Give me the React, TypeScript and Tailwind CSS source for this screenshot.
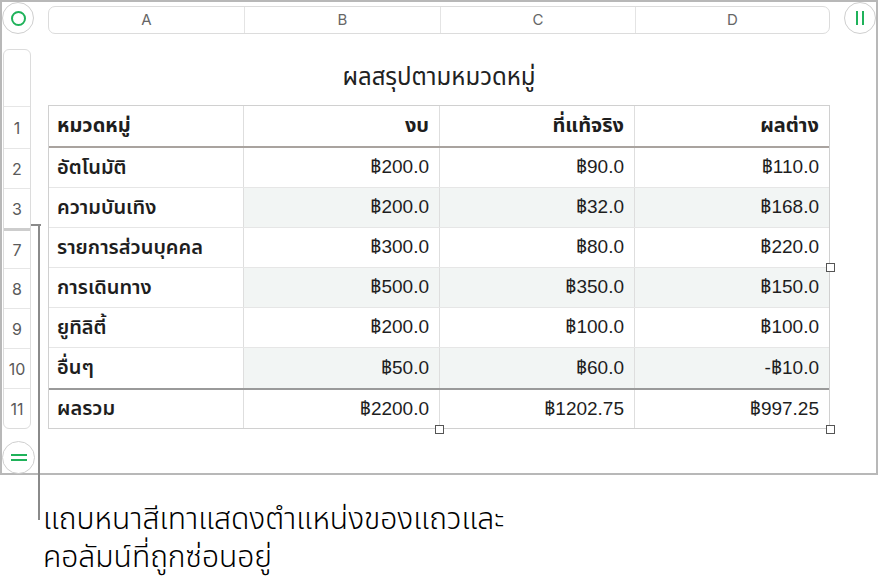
import React from "react";

const rows = [
  { n: "2", name: "อัตโนมัติ", b: "฿200.0", c: "฿90.0", d: "฿110.0", alt: false },
  { n: "3", name: "ความบันเทิง", b: "฿200.0", c: "฿32.0", d: "฿168.0", alt: true },
  { n: "7", name: "รายการส่วนบุคคล", b: "฿300.0", c: "฿80.0", d: "฿220.0", alt: false },
  { n: "8", name: "การเดินทาง", b: "฿500.0", c: "฿350.0", d: "฿150.0", alt: true },
  { n: "9", name: "ยูทิลิตี้", b: "฿200.0", c: "฿100.0", d: "฿100.0", alt: false },
  { n: "10", name: "อื่นๆ", b: "฿50.0", c: "฿60.0", d: "-฿10.0", alt: true },
];

const font = { fontFamily: '"Noto Sans Thai", "Noto Sans", "Liberation Sans", sans-serif' };
const numFont = { fontFamily: '"Liberation Sans", "Noto Sans Thai", sans-serif' };

function Handle({ className }: { className: string }) {
  return <div className={"absolute w-[9px] h-[9px] bg-white border border-[#555] " + className} />;
}

export default function App() {
  return (
    <div className="relative w-[880px] h-[585px] bg-white overflow-hidden" style={font}>
      {/* frame */}
      <div className="w-[878px] h-[475px] border-2 border-[#b8b8b8] flex flex-col">
        {/* top bar */}
        <div className="flex h-[31px]">
          <div className="w-[32px] h-[32px] rounded-full border border-[#cfcfcf] bg-white flex items-center justify-center shrink-0">
            <div className="w-[15px] h-[15px] rounded-full border-2 border-[#1fb25a]" />
          </div>
          <div className="ml-[14px] mt-[4px] w-[782px] h-[28px] rounded-[7px] border border-[#dcdcdc] flex text-[15px] text-[#666]" style={{ fontFamily: "Inter, sans-serif" }}>
            <div className="w-[196px] flex items-center justify-center border-r border-[#e4e4e4]">A</div>
            <div className="w-[196px] flex items-center justify-center border-r border-[#e4e4e4]">B</div>
            <div className="w-[195px] flex items-center justify-center border-r border-[#e4e4e4]">C</div>
            <div className="flex-1 flex items-center justify-center">D</div>
          </div>
          <div className="ml-[14px] w-[32px] h-[32px] rounded-full border border-[#cfcfcf] bg-white flex items-center justify-center gap-[4px] shrink-0">
            <div className="w-[2px] h-[14px] bg-[#1fb25a]" />
            <div className="w-[2px] h-[14px] bg-[#1fb25a]" />
          </div>
        </div>
        {/* body */}
        <div className="flex flex-1">
          {/* left rail */}
          <div className="w-[46px] flex flex-col">
            <div className="ml-[1px] mt-[16px] w-[28px] border border-[#dcdcdc] rounded-[6px] flex flex-col text-[16px] text-[#5a5a5a]" style={{ fontFamily: "Inter, sans-serif" }}>
              <div className="h-[56px]" />
              <div className="h-[42px] border-t border-[#e6e6e6] flex items-center justify-center">1</div>
              {rows.map((r) => (
                <div
                  key={r.n}
                  className={
                    "h-[40px] flex items-center justify-center " +
                    (r.n === "7" ? "border-t-[3px] border-[#cdcdcd]" : "border-t border-[#e6e6e6]")
                  }
                >
                  {r.n}
                </div>
              ))}
              <div className="h-[40px] border-t border-[#e6e6e6] flex items-center justify-center">11</div>
            </div>
            <div className="mt-[12px] w-[33px] h-[33px] rounded-full border border-[#cfcfcf] flex flex-col items-center justify-center gap-[3px]">
              <div className="w-[16px] h-[2px] bg-[#1fb25a]" />
              <div className="w-[16px] h-[2px] bg-[#1fb25a]" />
            </div>
          </div>
          {/* content */}
          <div className="flex flex-col">
            <div className="h-[72px] flex items-center justify-center pt-[18px] text-[24px] text-[#222] w-[782px]">
              ผลสรุปตามหมวดหมู่
            </div>
            <div className="relative w-[782px] border border-[#d0d0d0] text-[19px] text-[#1e1e1e]">
              {/* header */}
              <div className="flex h-[42px] border-b-2 border-[#a9a39f] font-bold text-[20px]">
                <div className="w-[195px] flex items-center pl-[8px] border-r border-[#dedede]">หมวดหมู่</div>
                <div className="w-[196px] flex items-center justify-end pr-[10px] border-r border-[#dedede]">งบ</div>
                <div className="w-[195px] flex items-center justify-end pr-[10px] border-r border-[#dedede]">ที่แท้จริง</div>
                <div className="flex-1 flex items-center justify-end pr-[10px]">ผลต่าง</div>
              </div>
              {rows.map((r, i) => (
                <div key={r.n} className={"flex h-[40px] " + (i < rows.length - 1 ? "border-b border-[#e6e6e6]" : "")}>
                  <div className="w-[195px] flex items-center pl-[8px] border-r border-[#dedede] font-semibold text-[20px]">{r.name}</div>
                  <div style={numFont} className={"w-[196px] flex items-center justify-end pr-[10px] border-r border-[#dedede] " + (r.alt ? "bg-[#f2f5f4]" : "")}>{r.b}</div>
                  <div style={numFont} className={"w-[195px] flex items-center justify-end pr-[10px] border-r border-[#dedede] " + (r.alt ? "bg-[#f2f5f4]" : "")}>{r.c}</div>
                  <div style={numFont} className={"flex-1 flex items-center justify-end pr-[10px] " + (r.alt ? "bg-[#f2f5f4]" : "")}>{r.d}</div>
                </div>
              ))}
              {/* total */}
              <div className="flex h-[40px] border-t-2 border-[#9a9a9a]">
                <div className="w-[195px] flex items-center pl-[8px] border-r border-[#dedede] font-semibold text-[20px]">ผลรวม</div>
                <div style={numFont} className="w-[196px] flex items-center justify-end pr-[10px] border-r border-[#dedede]">฿2200.0</div>
                <div style={numFont} className="w-[195px] flex items-center justify-end pr-[10px] border-r border-[#dedede]">฿1202.75</div>
                <div style={numFont} className="flex-1 flex items-center justify-end pr-[10px]">฿997.25</div>
              </div>
              <Handle className="right-[-6px] top-[157px]" />
              <Handle className="right-[-6px] bottom-[-6px]" />
              <Handle className="left-[386px] bottom-[-6px]" />
            </div>
          </div>
        </div>
      </div>
      {/* callout line */}
      <div className="absolute left-[31px] top-[224px] w-[10px] h-[2px] bg-[#8a8a8a]" />
      <div className="absolute left-[38px] top-[224px] w-[2px] h-[296px] bg-[#8a8a8a]" />
      {/* callout text */}
      <div className="absolute left-[43px] top-[501px] text-[30px] leading-[38px] text-black font-light">
        <div>แถบหนาสีเทาแสดงตำแหน่งของแถวและ</div>
        <div>คอลัมน์ที่ถูกซ่อนอยู่</div>
      </div>
    </div>
  );
}
